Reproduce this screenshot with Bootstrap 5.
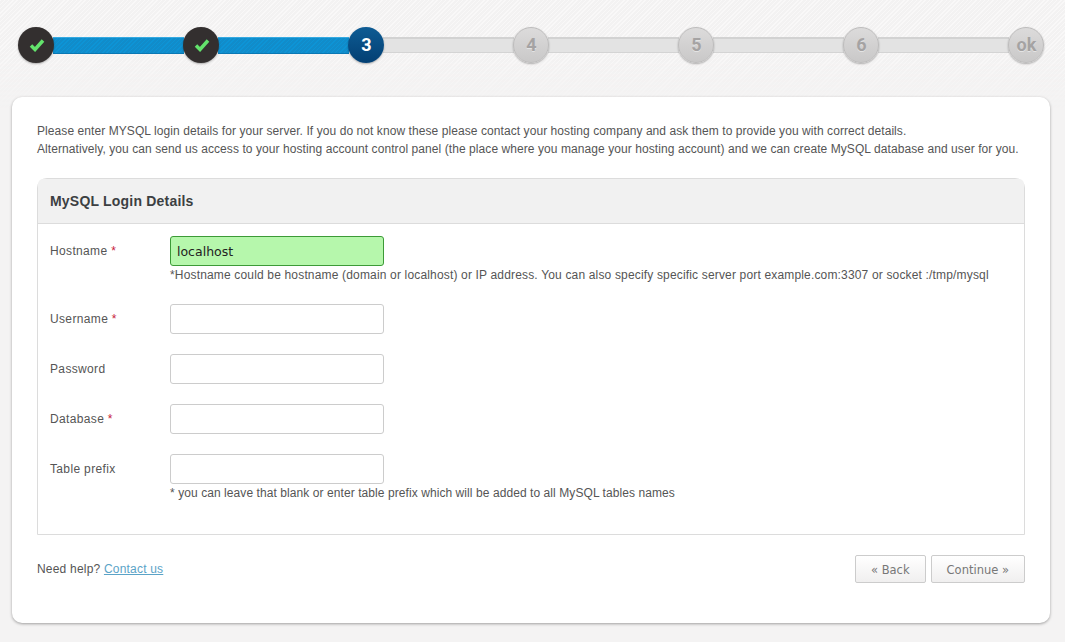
<!DOCTYPE html>
<html lang="en">

<head>
  <meta charset="UTF-8" />
  <meta name="viewport" content="width=device-width, initial-scale=1.0" />
  <title>MySQL Login Details</title>
  <link href="https://cdn.jsdelivr.net/npm/bootstrap@5.3.0/dist/css/bootstrap.min.css" rel="stylesheet" />
  <style>
    body {
      background-color: #f4f3f3;
      font-family: "Liberation Sans", Arial, sans-serif;
      font-size: 12px;
      line-height: 18px;
      color: #555;
      height: 642px;
      overflow: hidden;
      position: relative;
    }

    .stripes {
      position: absolute;
      left: 0;
      right: 0;
      top: 0;
      height: 110px;
      background: repeating-linear-gradient(135deg, #f9f8f8 0 1px, #f3f2f2 1px 3px);
      -webkit-mask-image: linear-gradient(#000 40%, transparent);
      mask-image: linear-gradient(#000 40%, transparent);
    }

    .wizard-steps {
      position: relative;
      padding: 27px 21px 0 18px;
    }

    .step-dot {
      flex: none;
      width: 36px;
      height: 36px;
      border-radius: 50%;
      position: relative;
      z-index: 1;
      font-family: "Liberation Sans Narrow", "Roboto", "Liberation Sans", sans-serif;
      font-weight: 700;
      font-size: 18px;
      padding-left: 1px;
      box-shadow: 0 1px 2px rgba(0, 0, 0, .3);
    }

    .step-dot.is-done {
      background: #332f2f;
    }

    .step-dot.is-current {
      background: linear-gradient(#0e5c94, #033f73);
      color: #fff;
    }

    .step-dot.is-todo {
      background: linear-gradient(#dcdbdb, #c9c8c8);
      border: 1px solid #bdbcbc;
      color: #a5a3a3;
      text-shadow: 0 1px 0 #e4e4e4;
    }

    .step-line {
      flex: 1 1 0;
      height: 16px;
      background: #e3e3e3;
      border-top: 2px solid #d2d2d2;
      border-bottom: 1px solid #d4d4d4;
      margin: 0 -1px;
    }

    .step-line.is-done {
      height: 17px;
      background: repeating-linear-gradient(135deg, #0d94d6 0 1px, #118cca 1px 3px);
      border-top: 1px solid #35a9e0;
      border-bottom: 1px solid #0a78b4;
    }

    .main-box {
      margin: 34px 15px 0 12px;
      height: 526px;
      padding: 25px 25px 0;
      background: #fff;
      border-radius: 10px;
      box-shadow: 0 1px 3px rgba(0, 0, 0, .35);
      position: relative;
    }

    .intro-text {
      margin-bottom: 20px;
      letter-spacing: .075px;
    }

    .details-card {
      height: 357px;
      border: 1px solid #dcdcdc;
      border-radius: 10px 10px 0 0;
    }

    .details-card .card-header {
      height: 45px;
      padding: 0 12px;
      background: #f1f1f1;
      border-bottom: 1px solid #dcdcdc;
      font-size: 14px;
      font-weight: 700;
      letter-spacing: .2px;
      color: #3c3f42;
      line-height: 44px;
    }

    .details-card .card-body {
      padding: 12px 12px 0;
    }

    .form-line {
      display: flex;
      margin-bottom: 20px;
    }

    .form-line label {
      width: 120px;
      flex: none;
      padding-top: 6px;
      letter-spacing: .35px;
    }

    .req {
      color: #c7203a;
    }

    .form-line .form-control {
      width: 214px;
      height: 30px;
      padding: 0 6px;
      border: 1px solid #ccc;
      border-radius: 3px;
      font-family: "DejaVu Sans", Verdana, sans-serif;
      font-size: 12.500px;
      color: #222;
      box-shadow: none;
    }

    .form-line .form-control.is-ok {
      background: #b6f7ac;
      border-color: #3c9a37;
    }

    .hint-text {
      height: 18px;
      letter-spacing: .075px;
      white-space: nowrap;
    }

    .hint-text.is-long {
      letter-spacing: .165px;
    }

    .help-row {
      margin-top: 20px;
      letter-spacing: .2px;
    }

    .help-row a {
      color: #5ba3c7;
    }

    .btn-group-step {
      column-gap: 5px;
      letter-spacing: 0;
    }

    .btn-step {
      height: 28px;
      padding: 4px 15px 0;
      background: linear-gradient(#fff, #f0efef);
      border: 1px solid #ccc;
      border-radius: 2px;
      font-family: "DejaVu Sans", Verdana, sans-serif;
      font-size: 11.500px;
      color: #777;
    }
  </style>
</head>

<body>

  <div class="stripes"></div>

  <div class="wizard-steps d-flex align-items-center">
    <div class="step-dot is-done d-flex align-items-center justify-content-center">
      <svg width="18" height="14" viewBox="0 0 18 14"><path d="M3 7.500l4 4 8-9" fill="none" stroke="#63e36c" stroke-width="3.500" /></svg>
    </div>
    <div class="step-line is-done"></div>
    <div class="step-dot is-done d-flex align-items-center justify-content-center">
      <svg width="18" height="14" viewBox="0 0 18 14"><path d="M3 7.500l4 4 8-9" fill="none" stroke="#63e36c" stroke-width="3.500" /></svg>
    </div>
    <div class="step-line is-done"></div>
    <div class="step-dot is-current d-flex align-items-center justify-content-center">3</div>
    <div class="step-line"></div>
    <div class="step-dot is-todo d-flex align-items-center justify-content-center">4</div>
    <div class="step-line"></div>
    <div class="step-dot is-todo d-flex align-items-center justify-content-center">5</div>
    <div class="step-line"></div>
    <div class="step-dot is-todo d-flex align-items-center justify-content-center">6</div>
    <div class="step-line"></div>
    <div class="step-dot is-todo d-flex align-items-center justify-content-center">ok</div>
  </div>

  <div class="main-box">
    <p class="intro-text">Please enter MYSQL login details for your server. If you do not know these please contact your hosting company and ask them to provide you with correct details.<br />Alternatively, you can send us access to your hosting account control panel (the place where you manage your hosting account) and we can create MySQL database and user for you.</p>

    <div class="card details-card">
      <div class="card-header">MySQL Login Details</div>
      <div class="card-body">
        <div class="form-line">
          <label for="db-host">Hostname <span class="req">*</span></label>
          <div>
            <input id="db-host" type="text" class="form-control is-ok" value="localhost" />
            <div class="hint-text is-long">*Hostname could be hostname (domain or localhost) or IP address. You can also specify specific server port example.com:3307 or socket :/tmp/mysql</div>
          </div>
        </div>
        <div class="form-line">
          <label for="db-user">Username <span class="req">*</span></label>
          <input id="db-user" type="text" class="form-control" />
        </div>
        <div class="form-line">
          <label for="db-pass">Password</label>
          <input id="db-pass" type="password" class="form-control" />
        </div>
        <div class="form-line">
          <label for="db-name">Database <span class="req">*</span></label>
          <input id="db-name" type="text" class="form-control" />
        </div>
        <div class="form-line">
          <label for="db-prefix">Table prefix</label>
          <div>
            <input id="db-prefix" type="text" class="form-control" />
            <div class="hint-text">* you can leave that blank or enter table prefix which will be added to all MySQL tables names</div>
          </div>
        </div>
      </div>
    </div>

    <div class="help-row d-flex justify-content-between align-items-center">
      <div>Need help? <a href="#">Contact us</a></div>
      <div class="btn-group-step d-flex">
        <button type="button" class="btn btn-step">&laquo; Back</button>
        <button type="button" class="btn btn-step">Continue &raquo;</button>
      </div>
    </div>
  </div>

</body>
</html>
